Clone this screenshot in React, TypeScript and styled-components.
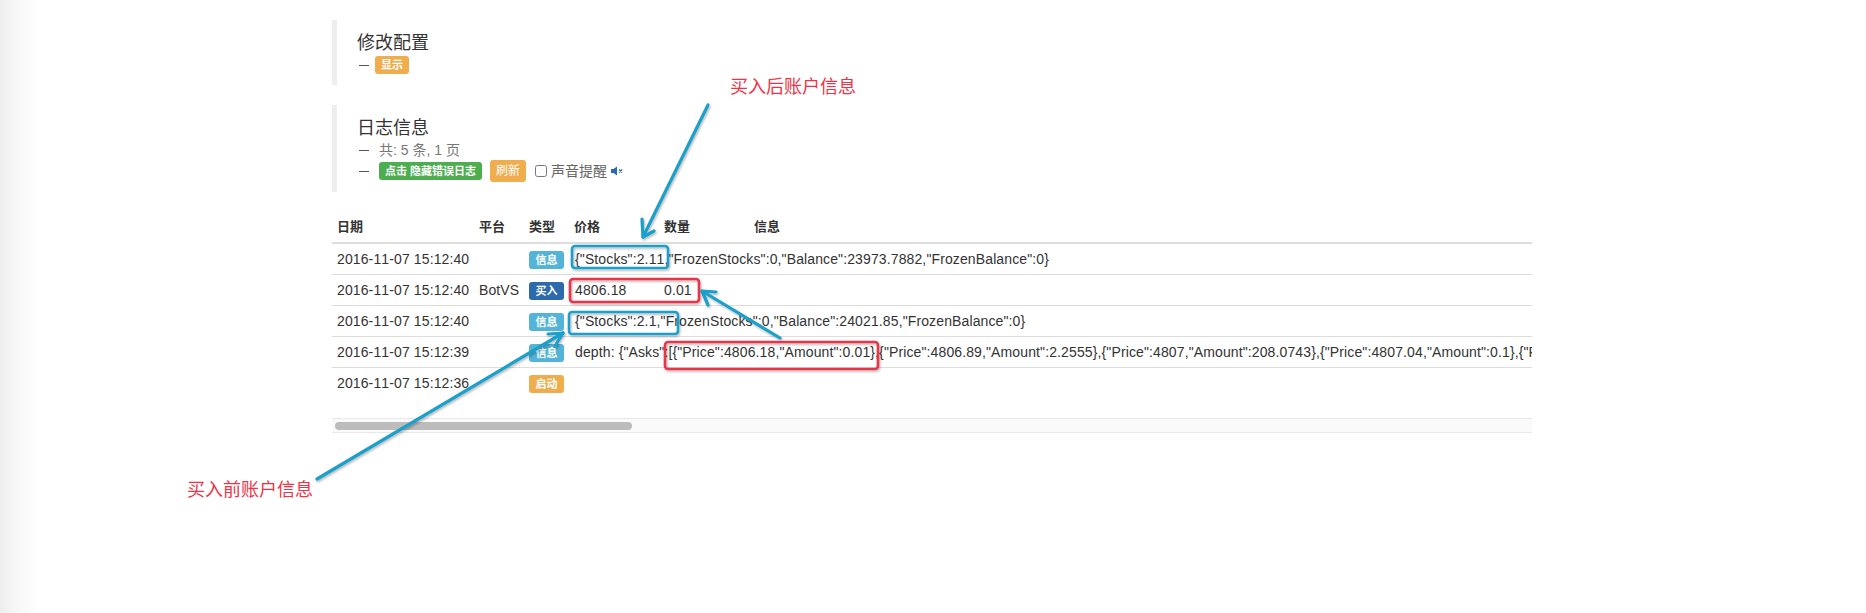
import React from "react";
import styled, { createGlobalStyle } from "styled-components";

const Global = createGlobalStyle`
  html, body { margin: 0; padding: 0; background: #fff; }
  body {
    font-family: "Liberation Sans", "Noto Sans CJK SC", sans-serif;
    font-size: 14px;
    line-height: 20px;
    color: #333;
  }
`;

const Page = styled.div`
  position: relative;
  width: 1866px;
  height: 613px;
  overflow: hidden;
  padding: 20px 334px 0 332px;
  box-sizing: border-box;
  background: linear-gradient(to right, #eeeeee 0, #f8f8f8 18px, #ffffff 40px);
`;

const Quote = styled.section`
  border-left: 5px solid #eee;
  padding: 10px 20px;
  margin-bottom: 20px;
`;

const Title = styled.h4`
  margin: 0;
  padding-top: 1px;
  font-size: 18px;
  font-weight: 400;
  line-height: 24px;
  color: #333;
`;

const Meta = styled.div<{ $gap?: number }>`
  display: flex;
  align-items: center;
  min-height: 20px;
  color: #777;
  font-size: 14px;
  &::before {
    content: "";
    width: 10px;
    height: 1px;
    background: #555;
    margin: 0 ${(p) => p.$gap ?? 10}px 0 2px;
  }
`;

const Badge = styled.span<{ $color: string }>`
  display: block;
  width: fit-content;
  background: ${(p) => p.$color};
  color: #fff;
  font-size: 11px;
  font-weight: 700;
  line-height: 18px;
  height: 18px;
  padding: 0 6px;
  border-radius: 3px;
  white-space: nowrap;
`;

const TypeBadge = styled(Badge)`
  margin-top: 2px;
  padding: 0 6.5px;
`;

const RefreshButton = styled.span`
  display: inline-block;
  background: #f0ad4e;
  color: #fff;
  font-size: 12px;
  line-height: 22px;
  height: 22px;
  padding: 0 6px;
  border-radius: 3px;
  margin-left: 8px;
`;

const Check = styled.input`
  width: 12px;
  height: 12px;
  margin: 0 4px 0 9px;
`;

const Sound = styled.span`
  color: #666;
  font-size: 14px;
`;

const MuteIcon = styled.svg`
  margin-left: 4px;
`;

const TableClip = styled.div`
  overflow: hidden;
  margin-bottom: 20px;
`;

const LogTable = styled.table`
  table-layout: fixed;
  border-collapse: collapse;
  width: 4850px;
`;

const Head = styled.th`
  text-align: left;
  font-weight: 700;
  font-size: 13px;
  padding: 5px;
  line-height: 20px;
  border-bottom: 2px solid #ddd;
  color: #333;
`;

const Row = styled.tr`
  &:not(:last-child) td {
    border-bottom: 1px solid #ddd;
  }
`;

const Cell = styled.td`
  padding: 5px;
  line-height: 20px;
  height: 20px;
  font-size: 14px;
  font-kerning: none;
  letter-spacing: 0.12px;
  white-space: nowrap;
  color: #333;
`;

const DataCell = styled(Cell)`
  padding-left: 6px;
`;

const ScrollTrack = styled.div`
  height: 15px;
  box-sizing: border-box;
  background: #fafafa;
  border-top: 1px solid #e8e8e8;
  border-bottom: 1px solid #e8e8e8;
  padding: 3px 3px;
`;

const ScrollThumb = styled.div`
  width: 297px;
  height: 8px;
  border-radius: 4px;
  background: #bcbcbc;
`;

const Overlay = styled.svg`
  position: absolute;
  left: 0;
  top: 0;
  pointer-events: none;
`;

const Note = styled.div<{ $x: number; $y: number }>`
  position: absolute;
  left: ${(p) => p.$x}px;
  top: ${(p) => p.$y}px;
  font-family: "Noto Sans CJK SC", sans-serif;
  font-size: 18px;
  line-height: 22px;
  color: #ee3346;
  white-space: nowrap;
`;

const BLUE = "#1f9fc9";
const RED = "#e8344a";

const rows = [
  { date: "2016-11-07 15:12:40", type: "信息", color: "#54b4d8", info: '{"Stocks":2.11,"FrozenStocks":0,"Balance":23973.7882,"FrozenBalance":0}' },
  { date: "2016-11-07 15:12:40", platform: "BotVS", type: "买入", color: "#2c6aae", price: "4806.18", amount: "0.01" },
  { date: "2016-11-07 15:12:40", type: "信息", color: "#54b4d8", info: '{"Stocks":2.1,"FrozenStocks":0,"Balance":24021.85,"FrozenBalance":0}' },
  { date: "2016-11-07 15:12:39", type: "信息", color: "#54b4d8", info: 'depth: {"Asks":[{"Price":4806.18,"Amount":0.01},{"Price":4806.89,"Amount":2.2555},{"Price":4807,"Amount":208.0743},{"Price":4807.04,"Amount":0.1},{"Price":4807.5,"Amount":1.5}]}' },
  { date: "2016-11-07 15:12:36", type: "启动", color: "#f0ad4e" },
];

const Arrow = ({ x1, y1, x2, y2, a, b }: { x1: number; y1: number; x2: number; y2: number; a: [number, number]; b: [number, number] }) => (
  <g stroke={BLUE} strokeWidth={3.2} fill="none" strokeLinecap="round" strokeLinejoin="round">
    <line x1={x1} y1={y1} x2={x2} y2={y2} />
    <polyline points={`${a[0]},${a[1]} ${x2},${y2} ${b[0]},${b[1]}`} />
  </g>
);

const Box = ({ x, y, w, h, c }: { x: number; y: number; w: number; h: number; c: string }) => (
  <rect x={x} y={y} width={w} height={h} rx={3} fill="none" stroke={c} strokeWidth={2.6} />
);

export default function App() {
  return (
    <Page>
      <Global />
      <Quote>
        <Title>修改配置</Title>
        <Meta $gap={6}>
          <Badge $color="#f0ad4e">显示</Badge>
        </Meta>
      </Quote>
      <Quote>
        <Title>日志信息</Title>
        <Meta>共: 5 条, 1 页</Meta>
        <Meta>
          <Badge $color="#4cae4f">点击 隐藏错误日志</Badge>
          <RefreshButton>刷新</RefreshButton>
          <Check type="checkbox" readOnly />
          <Sound>声音提醒</Sound>
          <MuteIcon width="13" height="10" viewBox="0 0 13 10">
            <path d="M0 3h2.5L6 0.5v9L2.5 7H0z" fill="#2c6aae" />
            <path d="M8 3.5l3 3M11 3.5l-3 3" stroke="#2c6aae" strokeWidth="1.2" />
          </MuteIcon>
        </Meta>
      </Quote>
      <TableClip>
        <LogTable>
          <colgroup>
            <col width="142" />
            <col width="50" />
            <col width="45" />
            <col width="90" />
            <col width="90" />
            <col />
          </colgroup>
          <thead>
            <tr>
              <Head>日期</Head>
              <Head>平台</Head>
              <Head>类型</Head>
              <Head>价格</Head>
              <Head>数量</Head>
              <Head>信息</Head>
            </tr>
          </thead>
          <tbody>
            {rows.map((r, i) => (
              <Row key={i}>
                <Cell>{r.date}</Cell>
                <Cell>{r.platform}</Cell>
                <Cell>
                  <TypeBadge $color={r.color}>{r.type}</TypeBadge>
                </Cell>
                {r.info ? (
                  <DataCell colSpan={3}>{r.info}</DataCell>
                ) : (
                  <>
                    <DataCell>{r.price}</DataCell>
                    <Cell>{r.amount}</Cell>
                    <Cell />
                  </>
                )}
              </Row>
            ))}
          </tbody>
        </LogTable>
      </TableClip>
      <ScrollTrack>
        <ScrollThumb />
      </ScrollTrack>

      <Overlay width="1866" height="613" viewBox="0 0 1866 613">
        <defs>
          <filter id="sh" x="-20%" y="-20%" width="140%" height="140%">
            <feDropShadow dx="1" dy="1.5" stdDeviation="1.2" floodColor="#000" floodOpacity="0.3" />
          </filter>
        </defs>
        <g filter="url(#sh)">
          <Box x={572} y={246} w={96} h={22} c={BLUE} />
          <Box x={569} y={312} w={109} h={22} c={BLUE} />
          <Box x={570} y={279} w={129} h={23} c={RED} />
          <Box x={665} y={342} w={213} h={27} c={RED} />
          <Arrow x1={708} y1={105} x2={643} y2={237} a={[642, 219]} b={[654, 231]} />
          <Arrow x1={317} y1={479} x2={563} y2={333} a={[548, 334]} b={[555, 346]} />
          <Arrow x1={780} y1={338} x2={702} y2={291} a={[716, 292]} b={[708, 305]} />
        </g>
      </Overlay>
      <Note $x={730} $y={74}>买入后账户信息</Note>
      <Note $x={187} $y={477}>买入前账户信息</Note>
    </Page>
  );
}
